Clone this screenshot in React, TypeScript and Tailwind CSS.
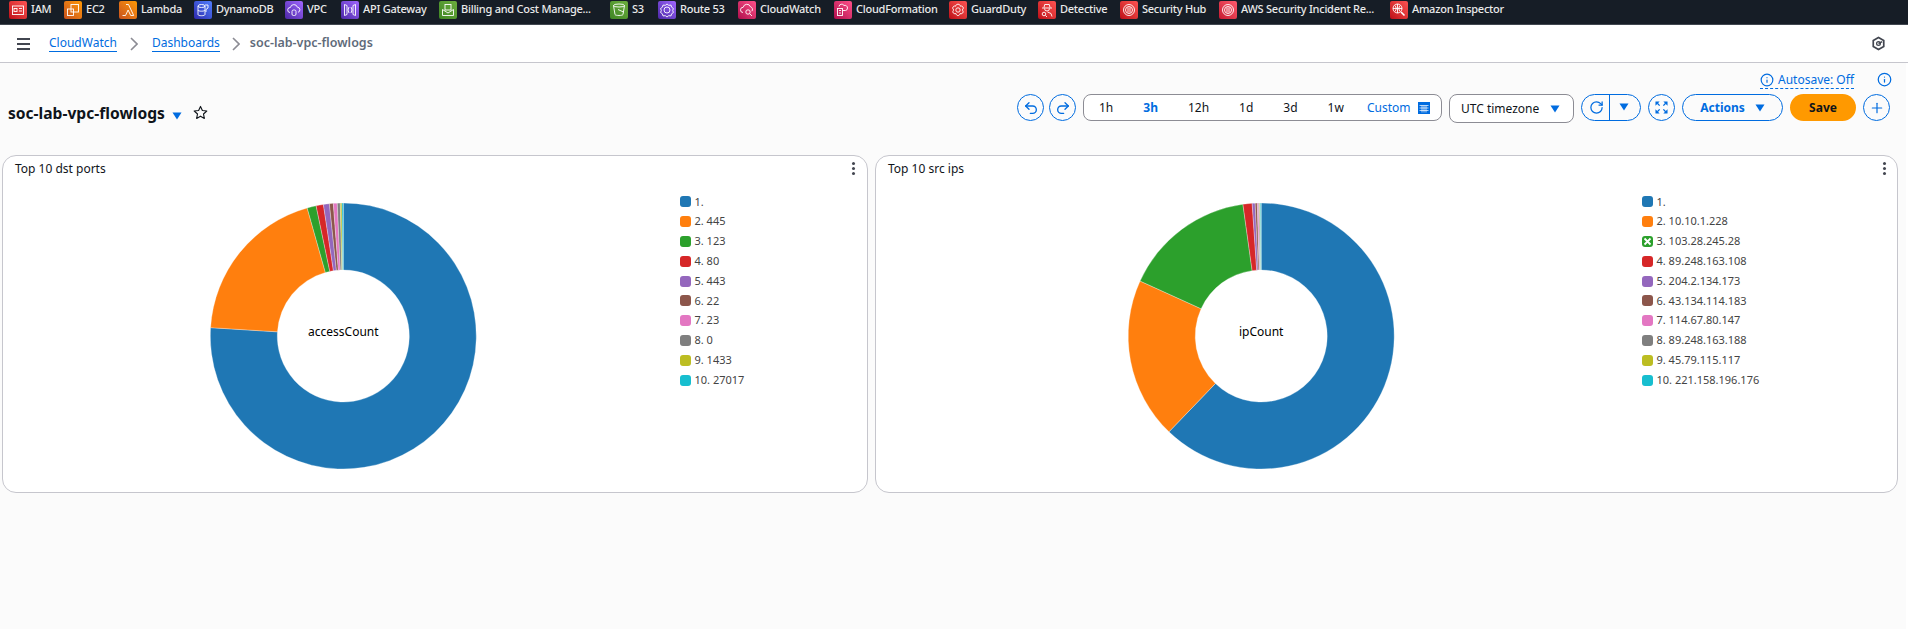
import React from "react";
import { Undo2, Redo2, RotateCw, Info, Plus } from "lucide-react";

const G = (p: { children: React.ReactNode }) => (
  <svg viewBox="0 0 18 18" className="w-[18px] h-[18px]" fill="none" stroke="#fff" strokeWidth={0.9}>
    {p.children}
  </svg>
);

const services = [
  { name: "IAM", w: "w-[55px]", bg: "from-[#bd0816] to-[#ff5252]", g: <><rect x="3.5" y="5" width="11" height="8.5" /><rect x="5" y="7.5" width="3" height="3" /><path d="M10 7.500h3M10 10h3" /></> },
  { name: "EC2", w: "w-[55px]", bg: "from-[#c8511b] to-[#ff9900]", g: <><rect x="7" y="3.5" width="7.5" height="7.5" /><rect x="3.5" y="8" width="6" height="6.5" /></> },
  { name: "Lambda", w: "w-[75px]", bg: "from-[#c8511b] to-[#ff9900]", g: <path d="M3.500 14.500h3l2.600-5.500 2.600 5.500h3L9.500 3.500H7" /> },
  { name: "DynamoDB", w: "w-[91px]", bg: "from-[#2e27ad] to-[#527fff]", g: <><ellipse cx="7.5" cy="5" rx="3.5" ry="1.5" /><path d="M4 5v8.500c0 1.600 7 1.600 7 0V5M4 9c0 1.600 7 1.600 7 0" /><path d="M11 4h3v3l-2 1.500V11" /></> },
  { name: "VPC", w: "w-[56px]", bg: "from-[#4d27a8] to-[#a166ff]", g: <><path d="M5 11.500a2.500 2.500 0 0 1 .4-5 3.600 3.600 0 0 1 7-.3 2.600 2.600 0 0 1 .6 5.100" /><rect x="7" y="9" width="4" height="5.5" rx="1.5" /></> },
  { name: "API Gateway", w: "w-[98px]", bg: "from-[#4d27a8] to-[#a166ff]", g: <><path d="M3.500 3.500v11l2.500-1v-9zM14.500 3.500v11l-2.500-1v-9z" /><path d="M8 6 7 9l1 3M10 6l1 3-1 3" /></> },
  { name: "Billing and Cost Manage...", w: "w-[171px]", bg: "from-[#3f8624] to-[#6cae3e]", g: <><path d="M3.500 8.500v6h11v-6L9 12z" /><rect x="6" y="3.5" width="6" height="5.5" /></> },
  { name: "S3", w: "w-[48px]", bg: "from-[#3f8624] to-[#6cae3e]", g: <><ellipse cx="9" cy="4.5" rx="5.5" ry="1.5" /><path d="M3.500 4.500 5 13.500c.4 1.300 7.600 1.300 8 0l1.500-9" /><path d="M8 8.500l5.500 2.500" /></> },
  { name: "Route 53", w: "w-[80px]", bg: "from-[#4d27a8] to-[#a166ff]", g: <><circle cx="9" cy="9" r="3" /><path d="M9 3l1.700 1.300 2.300-.2.6 2.100 1.800 1.300L14.700 9.500l.7 2-1.800 1.300-.6 2.100-2.300-.2L9 16l-1.700-1.300-2.300.2-.6-2.100-1.800-1.300.7-2-.7-2 1.800-1.300.6-2.100 2.300.2z" /></> },
  { name: "CloudWatch", w: "w-[96px]", bg: "from-[#b0084d] to-[#ff4f8b]", g: <><path d="M5 11.500a2.600 2.600 0 0 1 .2-5.200 3.800 3.800 0 0 1 7.300-.5 2.800 2.800 0 0 1 1.400 4.400" /><circle cx="10" cy="11" r="2.2" /><path d="M11.700 12.700l2.300 2.300" /></> },
  { name: "CloudFormation", w: "w-[115px]", bg: "from-[#b0084d] to-[#ff4f8b]", g: <><rect x="3.5" y="7.5" width="5" height="7" /><path d="M5 5.500a2.700 2.700 0 0 1 5 -1 2.600 2.600 0 0 1 3.500 2.500 2.400 2.400 0 0 1-2 2.500H8.500M5 9.500h2M5 12h2" /></> },
  { name: "GuardDuty", w: "w-[89px]", bg: "from-[#bd0816] to-[#ff5252]", g: <><circle cx="9" cy="9" r="2.2" /><path d="M9 3.200c1.700 0 2.400 1.300 2.300 2 1.300-.6 3 .2 3 1.900 0 1-.7 1.600-1.300 1.900.6.3 1.300 1 1.100 2.100-.3 1.500-1.900 2-3 1.400-.1.9-.9 2.100-2.100 2.100s-2-1.200-2.100-2.100c-1.100.6-2.700.1-3-1.400-.2-1.100.5-1.800 1.100-2.100-.6-.3-1.300-.9-1.300-1.900 0-1.700 1.700-2.500 3-1.900-.1-.7.6-2 2.300-2z" /></> },
  { name: "Detective", w: "w-[82px]", bg: "from-[#bd0816] to-[#ff5252]", g: <><path d="M6 6.500l.7-3h4.600l.7 3M4 7h10M6.500 7.500a2.500 2.500 0 0 0 5 0" /><circle cx="6" cy="13" r="1.8" /><path d="M7.500 14.500 9 16M9.500 11l3.500 1.500 1 3" /></> },
  { name: "Security Hub", w: "w-[99px]", bg: "from-[#bd0816] to-[#ff5252]", g: <><circle cx="9" cy="9" r="5.5" /><circle cx="9" cy="9" r="3.5" /><path d="M8 6.500v5M10 6.500v5" /></> },
  { name: "AWS Security Incident Re...", w: "w-[171px]", bg: "from-[#c7132f] to-[#ff5a6e]", g: <><circle cx="9" cy="9" r="5.5" /><circle cx="9" cy="9" r="3.5" /><path d="M8 6.500v5M10 6.500v5" /></> },
  { name: "Amazon Inspector", w: "w-[125px]", bg: "from-[#bd0816] to-[#ff5252]", g: <><circle cx="7.5" cy="7.5" r="4.5" /><path d="M3 7.500h9M7.500 3v9M5 4.500c1.500 2 1.500 4 0 6M10 4.500c-1.500 2-1.500 4 0 6" /><path d="M11 11l3.500 3.500" strokeWidth="1.6" /></> },
];

const PALETTE = ["#1f77b4", "#ff7f0e", "#2ca02c", "#d62728", "#9467bd", "#8c564b", "#e377c2", "#7f7f7f", "#bcbd22", "#17becf"];

function polar(cx: number, cy: number, r: number, deg: number) {
  const a = ((deg - 90) * Math.PI) / 180;
  return [cx + r * Math.cos(a), cy + r * Math.sin(a)];
}

function Donut(p: { cx: number; stops: number[]; label: string; width: string; w: number }) {
  const cy = 144;
  const R = 133;
  const r = 66;
  let prev = 0;
  return (
    <svg width={p.w} height={288} className={p.width + " shrink-0"}>
      {p.stops.map((end, i) => {
        const [x1, y1] = polar(p.cx, cy, R, prev);
        const [x2, y2] = polar(p.cx, cy, R, end);
        const [x3, y3] = polar(p.cx, cy, r, end);
        const [x4, y4] = polar(p.cx, cy, r, prev);
        const large = end - prev > 180 ? 1 : 0;
        const d = `M${x1} ${y1}A${R} ${R} 0 ${large} 1 ${x2} ${y2}L${x3} ${y3}A${r} ${r} 0 ${large} 0 ${x4} ${y4}Z`;
        prev = end;
        return <path key={i} d={d} fill={PALETTE[i]} stroke="#fff" strokeWidth={0.3} />;
      })}
      <text x={p.cx} y={cy} textAnchor="middle" fontSize={12} fill="#000" fontFamily="'Noto Sans', sans-serif">
        {p.label}
      </text>
    </svg>
  );
}

function Legend(p: { items: string[]; crossed?: number }) {
  return (
    <div className="flex flex-col">
      {p.items.map((t, i) => (
        <div key={i} className="flex items-center h-[19.8px] text-[11px] text-[#444] whitespace-nowrap">
          <span className="w-[11px] h-[11px] rounded-[3px] mr-[3.5px] flex items-center justify-center" style={{ background: PALETTE[i] }}>
            {p.crossed === i && (
              <svg viewBox="0 0 11 11" className="w-[11px] h-[11px]" stroke="#fff" strokeWidth={1.8}>
                <path d="M2.500 2.500l6 6M8.500 2.500l-6 6" />
              </svg>
            )}
          </span>
          {t}
        </div>
      ))}
    </div>
  );
}

function Kebab() {
  return (
    <div className="flex flex-col gap-[2px] mt-[1px]">
      <span className="w-[3px] h-[3px] rounded-full bg-[#424650]" />
      <span className="w-[3px] h-[3px] rounded-full bg-[#424650]" />
      <span className="w-[3px] h-[3px] rounded-full bg-[#424650]" />
    </div>
  );
}

function Caret(p: { color?: string }) {
  return (
    <svg viewBox="0 0 10 8" className="w-[10px] h-[8px]">
      <path d="M0.500 0.500h9L5 7.500z" fill={p.color ?? "#006ce0"} />
    </svg>
  );
}

function Circle(p: { children: React.ReactNode }) {
  return (
    <button className="w-[27px] h-[27px] rounded-full border border-[#006ce0] flex items-center justify-center text-[#006ce0] shrink-0">
      {p.children}
    </button>
  );
}

export default function App() {
  return (
    <div className="h-screen overflow-hidden bg-white font-['Noto_Sans',sans-serif] text-[#0f141a]">
      <div className="h-[25px] bg-[#161d26] border-b border-[#414750] flex items-start pl-[9px] pt-px overflow-hidden">
        {services.map((s) => (
          <div key={s.name} className={s.w + " flex items-start shrink-0"}>
            <span className={"w-[18px] h-[18px] rounded-[2px] bg-linear-to-tr flex " + s.bg}>
              <G>{s.g}</G>
            </span>
            <span className="ml-[4px] -mt-[1.5px] text-[11px] tracking-[-0.25px] leading-[18px] font-medium text-[#eaeaea] whitespace-nowrap">{s.name}</span>
          </div>
        ))}
      </div>

      <div className="h-[38px] bg-white border-b border-[#c6c6cd] flex items-center pl-[17px] pr-[22px] text-[12px]">
        <div className="flex flex-col gap-[3px] w-[13px]">
          <span className="h-[2px] bg-[#424650]" />
          <span className="h-[2px] bg-[#424650]" />
          <span className="h-[2px] bg-[#424650]" />
        </div>
        <a className="ml-[19px] text-[#006ce0] border-b border-[#006ce0] leading-[16px]">CloudWatch</a>
        <svg viewBox="0 0 8 14" className="w-[8px] h-[14px] ml-[13px] mr-[14px]" fill="none" stroke="#8c8c94" strokeWidth={1.6}>
          <path d="M1 1l6 6-6 6" />
        </svg>
        <a className="text-[#006ce0] border-b border-[#006ce0] leading-[16px]">Dashboards</a>
        <svg viewBox="0 0 8 14" className="w-[8px] h-[14px] ml-[12px] mr-[10px]" fill="none" stroke="#8c8c94" strokeWidth={1.6}>
          <path d="M1 1l6 6-6 6" />
        </svg>
        <span className="font-semibold text-[#5f6b7a] text-[12.5px]">soc-lab-vpc-flowlogs</span>
        <svg viewBox="0 0 16 16" className="w-[15px] h-[15px] ml-auto" fill="none" stroke="#424650">
          <path d="M8 1.500l5.600 3.200v6.600L8 14.500l-5.600-3.200V4.700z" strokeWidth={1.8} />
          <circle cx="8" cy="8" r="2" strokeWidth={1.4} />
          <path d="M8 8l4-2" strokeWidth={1.6} />
        </svg>
      </div>

      <div className="h-[566px] bg-[#fbfbfb] border-r-2 border-[#ffffff] pt-[8px]">
        <div className="flex justify-end items-start h-[18px] pr-[14px] text-[12px] text-[#006ce0]">
          <div className="flex items-center gap-[4px] h-[18px] border-b border-dashed border-[#006ce0] leading-[16px]">
            <Info size={14} strokeWidth={2} />
            <span>Autosave: Off</span>
          </div>
          <Info size={15} strokeWidth={2} className="ml-[23px] mt-[1px]" />
        </div>

        <div className="flex items-start pl-[8px] pr-[16px] mt-[5px] h-[61px]">
          <div className="flex items-center mt-[9px]">
            <span className="text-[15.6px] leading-[20px] font-bold">soc-lab-vpc-flowlogs</span>
            <span className="ml-[7px] mt-[5px]">
              <Caret />
            </span>
            <svg viewBox="0 0 16 16" className="w-[15px] h-[15px] ml-[11px] -mt-[2px]" fill="none" stroke="#0f141a" strokeWidth={1.2} strokeLinejoin="round">
              <path d="M8 1.500l2 4.300 4.700.6-3.500 3.200.9 4.700L8 11.900l-4.100 2.400.9-4.700L1.300 6.400l4.700-.6z" />
            </svg>
          </div>

          <div className="ml-auto flex items-start gap-[7px] text-[12px]">
            <div className="flex gap-[5px]">
              <Circle><Undo2 size={16} strokeWidth={2} /></Circle>
              <Circle><Redo2 size={16} strokeWidth={2} /></Circle>
            </div>

            <div className="w-[359px] h-[27px] rounded-[8px] border border-[#8c8c94] bg-white flex items-center pl-[15px] gap-[30px]">
              <span>1h</span>
              <span className="font-bold text-[#006ce0]">3h</span>
              <span>12h</span>
              <span>1d</span>
              <span>3d</span>
              <span>1w</span>
              <span className="flex items-center text-[#006ce0] -ml-[7px]">
                Custom
                <svg viewBox="0 0 12 12" className="w-[12px] h-[12px] ml-[8px]">
                  <rect width="12" height="12" fill="#006ce0" />
                  <path d="M1.500 3.500h9M1.500 6h9M1.500 8.500h9M4 3.500v7M6 3.500v7M8 3.500v7" stroke="#fff" strokeWidth={0.7} />
                </svg>
              </span>
            </div>

            <div className="w-[125px] h-[29px] rounded-[8px] border border-[#8c8c94] bg-white flex items-center pl-[11px] pr-[13px] justify-between">
              <span>UTC timezone</span>
              <Caret />
            </div>

            <div className="w-[60px] h-[27px] rounded-full border border-[#006ce0] flex items-stretch text-[#006ce0]">
              <span className="w-[28px] flex items-center justify-center border-r border-[#006ce0] pl-[2px]">
                <RotateCw size={15} strokeWidth={2} />
              </span>
              <span className="flex-1 flex items-center justify-center pr-[2px] pb-[2px]">
                <Caret />
              </span>
            </div>

            <Circle>
              <svg viewBox="0 0 14 14" className="w-[13px] h-[13px]" fill="#006ce0">
                <path d="M0.500 0.500h4.500L0.500 5zM13.500 0.500h-4.500l4.500 4.500zM0.500 13.500h4.500L0.500 9zM13.500 13.500h-4.500l4.500-4.500z" />
                <path d="M2.500 2.500l2.500 2.500M11.500 2.500L9 5M2.500 11.500L5 9M11.500 11.500L9 9" stroke="#006ce0" strokeWidth={1.4} />
              </svg>
            </Circle>

            <button className="w-[101px] h-[27px] rounded-full border border-[#006ce0] flex items-center justify-center gap-[10px] font-bold text-[#006ce0]">
              Actions
              <Caret />
            </button>

            <button className="w-[66px] h-[27px] rounded-full bg-[#ff9900] font-bold text-[#0f141a]">Save</button>

            <Circle><Plus size={16} strokeWidth={1.8} /></Circle>
          </div>
        </div>

        <div className="flex gap-[7px] pl-[2px]">
          <section className="w-[866px] h-[338px] rounded-[14px] border border-[#c6c6cd] bg-white overflow-hidden">
            <header className="h-[36px] flex items-start justify-between pt-[5px] pl-[12px] pr-[12px] text-[12px] leading-[16px]">
              <span>Top 10 dst ports</span>
              <Kebab />
            </header>
            <div className="flex">
              <Donut cx={340.3} w={677} width="w-[677px]" stops={[273.6, 344.25, 348.2, 351.4, 354, 355.7, 357.4, 358.7, 359.4, 360]} label="accessCount" />
              <Legend items={["1.", "2. 445", "3. 123", "4. 80", "5. 443", "6. 22", "7. 23", "8. 0", "9. 1433", "10. 27017"]} />
            </div>
          </section>

          <section className="w-[1023px] h-[338px] rounded-[14px] border border-[#c6c6cd] bg-white overflow-hidden">
            <header className="h-[36px] flex items-start justify-between pt-[5px] pl-[12px] pr-[11px] text-[12px] leading-[16px]">
              <span>Top 10 src ips</span>
              <Kebab />
            </header>
            <div className="flex">
              <Donut cx={385.2} w={766} width="w-[766px]" stops={[223.9, 294.4, 352.1, 356.1, 357.4, 358.3, 358.85, 359.3, 359.6, 360]} label="ipCount" />
              <Legend
                crossed={2}
                items={["1.", "2. 10.10.1.228", "3. 103.28.245.28", "4. 89.248.163.108", "5. 204.2.134.173", "6. 43.134.114.183", "7. 114.67.80.147", "8. 89.248.163.188", "9. 45.79.115.117", "10. 221.158.196.176"]}
              />
            </div>
          </section>
        </div>
      </div>
    </div>
  );
}
